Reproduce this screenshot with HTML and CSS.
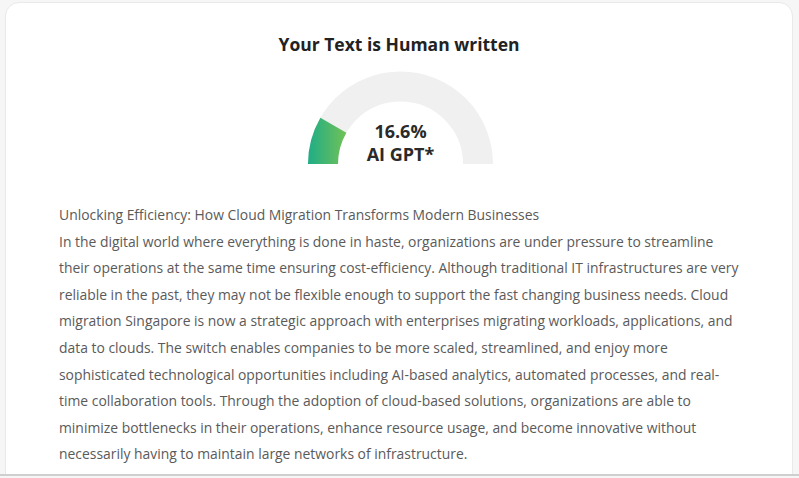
FILE: index.html
```html
<!DOCTYPE html>
<html lang="en">
<head>
<meta charset="utf-8">
<title>AI Detector Result</title>
<link rel="stylesheet" href="styles.css">
</head>
<body>
<div class="frame">
  <div class="card">
    <h1 class="title">Your Text is Human written</h1>
    <div class="gauge">
      <svg class="gauge-svg" width="185" height="93" viewBox="0 0 185 93" aria-hidden="true">
        <defs>
          <linearGradient id="g" gradientUnits="userSpaceOnUse" x1="0" y1="0" x2="42" y2="0">
            <stop offset="0" stop-color="#1fad86"/>
            <stop offset="1" stop-color="#79c352"/>
          </linearGradient>
        </defs>
        <path d="M 15 93 A 77.5 77.5 0 0 1 170 93" fill="none" stroke="#f0f0f0" stroke-width="30"/>
        <path d="M 15 93 A 77.5 77.5 0 0 1 25.38 54.25" fill="none" stroke="url(#g)" stroke-width="30"/>
      </svg>
      <div class="gauge-label">
        <div>16.6%</div>
        <div>AI GPT*</div>
      </div>
    </div>
    <div class="text">
      <p>Unlocking Efficiency: How Cloud Migration Transforms Modern Businesses</p>
      <p>In the digital world where everything is done in haste, organizations are under pressure to streamline their operations at the same time ensuring cost-efficiency. Although traditional IT infrastructures are very reliable in the past, they may not be flexible enough to support the fast changing business needs. Cloud migration Singapore is now a strategic approach with enterprises migrating workloads, applications, and data to clouds. The switch enables companies to be more scaled, streamlined, and enjoy more sophisticated technological opportunities including AI-based analytics, automated processes, and real-time collaboration tools. Through the adoption of cloud-based solutions, organizations are able to minimize bottlenecks in their operations, enhance resource usage, and become innovative without necessarily having to maintain large networks of infrastructure.</p>
      <p>Flexible scalability is one of the key benefits that make cloud-based solutions attractive to businesses of every size in the region.</p>
    </div>
  </div>
</div>
</body>
</html>
```
FILE: styles.css
```css
html, body {
  margin: 0;
  padding: 0;
  background: #f6f6f6;
}

body {
  width: 799px;
  height: 478px;
  overflow: hidden;
  font-family: "Open Sans", "Noto Sans", sans-serif;
}

.frame {
  height: 476px;
  overflow: hidden;
  border-bottom: 2px solid #cfcfcf;
  padding: 2px 6px 0 5px;
  box-sizing: border-box;
}

.card {
  background: #ffffff;
  border: 1px solid #e9e9e9;
  border-radius: 14px;
  padding: 29px 0 0 53px;
  box-sizing: border-box;
  height: 600px;
}

.title {
  margin: 0 53px 0 0;
  text-align: center;
  font-size: 17.5px;
  line-height: 24px;
  font-weight: 700;
  color: #222222;
}

.gauge {
  position: relative;
  width: 185px;
  height: 93px;
  margin: 15px auto 0 249px;
}

.gauge-svg {
  display: block;
}

.gauge-label {
  position: absolute;
  left: 0;
  right: 0;
  bottom: -2px;
  text-align: center;
  font-size: 18px;
  line-height: 23px;
  font-weight: 700;
  color: #2a2a2a;
}

.text {
  margin-top: 38px;
  width: 682px;
  font-size: 13.9px;
  line-height: 26.6px;
  color: #5a5a5a;
}

.text p {
  margin: 0;
}
```
